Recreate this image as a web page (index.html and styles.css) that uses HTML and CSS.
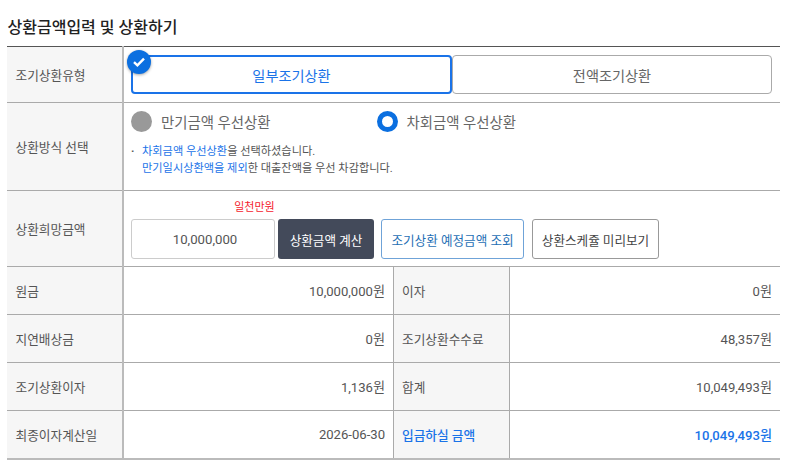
FILE: index.html
```html
<!DOCTYPE html>
<html lang="ko">
<head>
<meta charset="utf-8">
<title>상환금액입력 및 상환하기</title>
<link rel="stylesheet" href="styles.css">
</head>
<body>
<h2 class="title">상환금액입력 및 상환하기</h2>
<table class="form">
  <colgroup><col class="c1"><col class="c2"><col class="c3"><col class="c4"></colgroup>
  <tr class="r-type">
    <th>조기상환유형</th>
    <td colspan="3" class="type">
      <div class="tabs">
        <div class="tab on">
          <span class="badge"><svg width="14" height="12" viewBox="0 0 14 12"><path d="M2 6.2 5.4 9.4 12 2.6" fill="none" stroke="#fff" stroke-width="2.4"/></svg></span>
          일부조기상환
        </div>
        <div class="tab">전액조기상환</div>
      </div>
    </td>
  </tr>
  <tr class="r-method">
    <th>상환방식 선택</th>
    <td colspan="3" class="method">
      <div class="radios">
        <label class="radio"><span class="dot off"></span>만기금액 우선상환</label>
        <label class="radio"><span class="dot sel"></span>차회금액 우선상환</label>
      </div>
      <div class="note">
        <span class="bullet">·</span>
        <p><span class="blue">차회금액 우선상환</span>을 선택하셨습니다.<br><span class="blue">만기일시상환액을 제외</span>한 대출잔액을 우선 차감합니다.</p>
      </div>
    </td>
  </tr>
  <tr class="r-amount">
    <th>상환희망금액</th>
    <td colspan="3" class="amount">
      <div class="actions">
        <div class="field">
          <span class="hint">일천만원</span>
          <div class="input">10,000,000</div>
        </div>
        <div class="btn dark">상환금액 계산</div>
        <div class="btn outline-blue">조기상환 예정금액 조회</div>
        <div class="btn outline">상환스케쥴 미리보기</div>
      </div>
    </td>
  </tr>
  <tr class="r-data">
    <th>원금</th><td class="num">10,000,000원</td>
    <th>이자</th><td class="num">0원</td>
  </tr>
  <tr class="r-data">
    <th>지연배상금</th><td class="num">0원</td>
    <th>조기상환수수료</th><td class="num">48,357원</td>
  </tr>
  <tr class="r-data">
    <th>조기상환이자</th><td class="num">1,136원</td>
    <th>합계</th><td class="num">10,049,493원</td>
  </tr>
  <tr class="r-data">
    <th>최종이자계산일</th><td class="num">2026-06-30</td>
    <th class="total">입금하실 금액</th><td class="num total">10,049,493원</td>
  </tr>
</table>
</body>
</html>
```
FILE: styles.css
```css
* { box-sizing: border-box; }
html, body { margin: 0; padding: 0; background: #fff; }
body {
  width: 800px;
  height: 465px;
  overflow: hidden;
  padding: 18px 20px 0 7px;
  font-family: Roboto, "Noto Sans CJK KR", sans-serif;
  font-size: 13px;
  color: #555;
}
.title {
  margin: 0 0 9px;
  height: 19px;
  line-height: 19px;
  font-size: 16px;
  font-weight: 500;
  color: #222;
  padding-left: 0.5px;
}
.form {
  width: 773px;
  table-layout: fixed;
  border-collapse: collapse;
  border-top: 1px solid #555;
  border-bottom: 2px solid #bbb;
}
.c1 { width: 116px; }
.c2 { width: 270px; }
.c3 { width: 116px; }
.c4 { width: 271px; }
th, td { padding: 0; border-top: 1px solid #aaa; border-left: 1px solid #aaa; }
tr:first-child th, tr:first-child td { border-top: 0; }
th:first-child { border-left: 0; border-right: 2px solid #bbb; }
th {
  background: #f6f6f6;
  font-weight: 400;
  font-size: 12.7px;
  text-align: left;
  padding-left: 8.5px;
  color: #555;
}
.r-type { height: 56px; }
.r-method { height: 88px; }
.r-amount { height: 76px; }
.r-data { height: 48px; }
.r-data td.num { text-align: right; padding-right: 8px; color: #555; font-size: 13.1px; }
.r-data td:nth-child(2) { padding-right: 7.5px; }
.blue { color: #1a73e8; }
.r-data th.total, .r-data td.total { color: #1a73e8; font-weight: 500; }
.type { vertical-align: top; }
.tabs { display: flex; padding: 8px 8px 8px 7px; }
.tab {
  position: relative;
  flex: 1 1 0;
  height: 39px;
  display: flex;
  align-items: center;
  justify-content: center;
  border: 1px solid #aaa;
  border-radius: 4px;
  font-size: 14.2px;
  color: #666;
}
.tab.on { flex: 0 0 321px; border: 2px solid #1a73e8; color: #1a73e8; }
.badge {
  position: absolute;
  left: -6px;
  top: -7px;
  width: 24px;
  height: 24px;
  border-radius: 50%;
  background: #0b6fe0;
  box-shadow: 0 1px 3px rgba(0,0,0,.35);
  display: flex;
  align-items: center;
  justify-content: center;
}
.method { vertical-align: top; padding: 7px 0 0 7px; }
.radios { display: flex; gap: 106px; height: 22px; align-items: center; }
.radio { display: flex; align-items: center; gap: 9px; font-size: 14.4px; color: #666; }
.dot { width: 21px; height: 21px; border-radius: 50%; display: block; }
.dot.off { background: #999; }
.dot.sel { background: #fff; border: 5px solid #0b6fe0; }
.note { display: flex; margin-top: 11px; font-size: 11.2px; line-height: 17px; color: #555; }
.bullet { width: 11px; font-weight: 700; }
.note p { margin: 0; }
.amount { vertical-align: top; padding: 28px 0 0 7px; }
.actions { display: flex; gap: 3px; align-items: flex-start; }
.field { position: relative; }
.hint {
  position: absolute;
  left: 0;
  right: 0;
  top: -19px;
  text-align: center;
  padding-left: 103px;
  white-space: nowrap;
  font-size: 11px;
  line-height: 16px;
  color: #f5222d;
}
.input {
  width: 144px;
  height: 40px;
  border: 1px solid #ccc;
  border-radius: 3px;
  display: flex;
  align-items: center;
  justify-content: center;
  padding-left: 4px;
  font-size: 13.2px;
  color: #555;
}
.btn {
  height: 40px;
  display: flex;
  align-items: center;
  justify-content: center;
  border-radius: 3px;
  font-size: 12.6px;
  white-space: nowrap;
}
.dark { width: 96px; background: #434a5a; color: #fff; margin-right: 4px; }
.outline-blue { width: 143px; border: 1px solid #6fa3d8; color: #1f6fb5; margin-right: 5px; }
.outline { width: 127px; border: 1px solid #999; color: #444; }
```
